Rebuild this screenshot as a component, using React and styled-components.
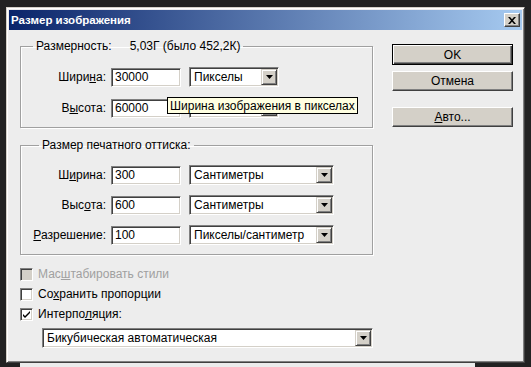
import React from 'react';
import styled, { createGlobalStyle } from 'styled-components';

const GlobalStyle = createGlobalStyle`
  html, body {
    margin: 0;
    padding: 0;
    background: #222222;
  }
  body {
    font-family: "Liberation Sans", Arial, sans-serif;
    font-size: 12px;
    color: #000;
  }
`;

const Screen = styled.div`
  width: 531px;
  height: 367px;
  overflow: hidden;
  background: #222222;
  padding: 7px 0 0 6px;
  box-sizing: border-box;
`;

const Window = styled.div`
  width: 519px;
  height: 356px;
  box-sizing: border-box;
  background: #ededed;
  border: 1px solid;
  border-color: #d4d0c8 #404040 #404040 #d4d0c8;
  box-shadow: inset 1px 1px 0 #ffffff, inset -1px -1px 0 #808080;
  padding: 2px;
  display: flex;
  flex-direction: column;
`;

const BehindStrip = styled.div`
  margin-left: 14px;
  width: 455px;
  height: 4px;
  background: #ececec;
`;

const TitleBar = styled.div`
  height: 20px;
  display: flex;
  align-items: center;
  justify-content: space-between;
  padding: 0 2px 0 2px;
  background: linear-gradient(to right, #0a246a, #a6caf0);
  color: #ffffff;
  font-weight: bold;
  font-size: 11.5px;
`;

const CloseButton = styled.div`
  width: 16px;
  height: 14px;
  box-sizing: border-box;
  background: #d4d0c8;
  border: 1px solid;
  border-color: #ffffff #404040 #404040 #ffffff;
  box-shadow: inset -1px -1px 0 #808080;
  display: flex;
  align-items: center;
  justify-content: center;
`;

const Body = styled.div`
  flex: 1;
  display: flex;
  padding: 10px 8px 0 11px;
  gap: 19px;
`;

const LeftCol = styled.div`
  width: 353px;
  display: flex;
  flex-direction: column;
`;

const RightCol = styled.div`
  width: 121px;
  display: flex;
  flex-direction: column;
  padding-top: 4px;
`;

const Group = styled.fieldset`
  margin: ${p => p.$top || 0}px 0 0 0;
  padding: ${p => p.$padTop}px 0 9px 0;
  border: 1px solid #a0a0a0;
  box-shadow: inset 1px 1px 0 #ffffff, 1px 1px 0 #ffffff;
  display: flex;
  flex-direction: column;
  gap: ${p => p.$gap}px;
`;

const Legend = styled.legend`
  margin-left: ${p => p.$offset}px;
  padding: 0 3px;
  line-height: 13px;
  white-space: pre;
`;

const LegendValue = styled.span`
  margin-left: 18px;
`;

const Row = styled.div`
  position: relative;
  display: flex;
  align-items: center;
  height: 20px;
  margin-top: ${p => p.$top || 0}px;
`;

const Label = styled.div`
  width: 85px;
  margin-right: 5px;
  text-align: right;
`;

const Key = styled.u`
  text-decoration: underline;
`;

const TextBox = styled.div`
  width: 70px;
  height: 19px;
  box-sizing: border-box;
  margin-right: 8px;
  background: #ffffff;
  border: 1px solid;
  border-color: #808080 #ffffff #ffffff #808080;
  box-shadow: inset 1px 1px 0 #404040, inset -1px -1px 0 #d4d0c8;
  padding: 0 3px;
  display: flex;
  align-items: center;
`;

const Select = styled.div`
  width: ${p => p.$width}px;
  height: 20px;
  box-sizing: border-box;
  margin-left: ${p => p.$left || 0}px;
  background: #ffffff;
  border: 1px solid;
  border-color: #808080 #ffffff #ffffff #808080;
  box-shadow: inset 1px 1px 0 #404040, inset -1px -1px 0 #d4d0c8;
  display: flex;
  align-items: center;
  padding: 1px;
`;

const SelectText = styled.div`
  flex: 1;
  padding-left: 3px;
  white-space: nowrap;
  overflow: hidden;
`;

const DropButton = styled.div`
  width: 16px;
  height: 16px;
  box-sizing: border-box;
  background: #d4d0c8;
  border: 1px solid;
  border-color: #d4d0c8 #404040 #404040 #d4d0c8;
  box-shadow: inset 1px 1px 0 #ffffff, inset -1px -1px 0 #808080;
  display: flex;
  align-items: center;
  justify-content: center;
`;

const Tooltip = styled.div`
  position: absolute;
  left: 146px;
  top: -1px;
  height: 17px;
  box-sizing: border-box;
  padding: 0 2px;
  background: #ffffe1;
  border: 1px solid #000000;
  display: flex;
  align-items: center;
  white-space: nowrap;
`;

const Checks = styled.div`
  margin-top: 9px;
  display: flex;
  flex-direction: column;
`;

const CheckRow = styled.div`
  height: 20px;
  display: flex;
  align-items: center;
  gap: 5px;
  color: ${p => (p.$disabled ? '#a0a0a0' : '#000000')};
`;

const Box = styled.div`
  width: 13px;
  height: 13px;
  box-sizing: border-box;
  background: ${p => (p.$disabled ? '#d4d0c8' : '#ffffff')};
  border: 1px solid;
  border-color: #808080 #ffffff #ffffff #808080;
  box-shadow: inset 1px 1px 0 #404040, inset -1px -1px 0 #d4d0c8;
  display: flex;
  align-items: center;
  justify-content: center;
`;

const Button = styled.div`
  height: ${p => (p.$default ? 21 : 20)}px;
  margin-bottom: ${p => p.$after || 0}px;
  box-sizing: border-box;
  background: #d4d0c8;
  border: 1px solid;
  border-color: ${p => (p.$default ? '#000000' : '#ffffff #404040 #404040 #ffffff')};
  box-shadow: ${p =>
    p.$default
      ? 'inset 1px 1px 0 #ffffff, inset -1px -1px 0 #404040, inset -2px -2px 0 #808080'
      : 'inset -1px -1px 0 #808080'};
  display: flex;
  align-items: center;
  justify-content: center;
`;

const Arrow = () => (
  <svg width="7" height="4" viewBox="0 0 7 4">
    <path d="M0 0h7L3.5 4z" fill="#000" />
  </svg>
);

const Dropdown = ({ width, left, children }) => (
  <Select $width={width} $left={left}>
    <SelectText>{children}</SelectText>
    <DropButton>
      <Arrow />
    </DropButton>
  </Select>
);

const Field = ({ label, value, unit, unitWidth, children }) => (
  <Row>
    <Label>{label}</Label>
    <TextBox>{value}</TextBox>
    <Dropdown width={unitWidth}>{unit}</Dropdown>
    {children}
  </Row>
);

const Check = ({ checked, disabled, children }) => (
  <CheckRow $disabled={disabled}>
    <Box $disabled={disabled}>
      {checked && (
        <svg width="9" height="9" viewBox="0 0 9 9">
          <path d="M1 4l2 2 5-5v2l-5 5-2-2z" fill="#000" />
        </svg>
      )}
    </Box>
    <span>{children}</span>
  </CheckRow>
);

export default function App() {
  return (
    <>
      <GlobalStyle />
      <Screen>
        <Window>
          <TitleBar>
            <span>Размер изображения</span>
            <CloseButton>
              <svg width="8" height="7" viewBox="0 0 8 7">
                <path d="M0 0h2l2 2.3L6 0h2L5 3.5 8 7H6L4 4.7 2 7H0l3-3.5z" fill="#000" />
              </svg>
            </CloseButton>
          </TitleBar>
          <Body>
            <LeftCol>
              <Group $padTop={14} $gap={11}>
                <Legend $offset={12}>
                  Размерность:<LegendValue>5,03Г (было 452,2К)</LegendValue>
                </Legend>
                <Field
                  label={<>Шири<Key>н</Key>а:</>}
                  value="30000"
                  unit="Пикселы"
                  unitWidth={90}
                />
                <Field
                  label={<>В<Key>ы</Key>сота:</>}
                  value="60000"
                  unit=""
                  unitWidth={90}
                >
                  <Tooltip>Ширина изображения в пикселах</Tooltip>
                </Field>
              </Group>
              <Group $top={11} $padTop={13} $gap={10}>
                <Legend $offset={18}>Размер печатного оттиска:</Legend>
                <Field
                  label={<>Ш<Key>и</Key>рина:</>}
                  value="300"
                  unit="Сантиметры"
                  unitWidth={145}
                />
                <Field
                  label={<>Выс<Key>о</Key>та:</>}
                  value="600"
                  unit="Сантиметры"
                  unitWidth={145}
                />
                <Field
                  label={<><Key>Р</Key>азрешение:</>}
                  value="100"
                  unit="Пикселы/сантиметр"
                  unitWidth={145}
                />
              </Group>
              <Checks>
                <Check disabled>Мас<Key>ш</Key>табировать стили</Check>
                <Check>Со<Key>х</Key>ранить пропорции</Check>
                <Check checked>Интерпо<Key>л</Key>яция:</Check>
              </Checks>
              <Row $top={4}>
                <Dropdown width={333} left={22}>Бикубическая автоматическая</Dropdown>
              </Row>
            </LeftCol>
            <RightCol>
              <Button $default $after={6}>OK</Button>
              <Button $after={16}>Отмена</Button>
              <Button><Key>А</Key>вто...</Button>
            </RightCol>
          </Body>
        </Window>
        <BehindStrip />
      </Screen>
    </>
  );
}
